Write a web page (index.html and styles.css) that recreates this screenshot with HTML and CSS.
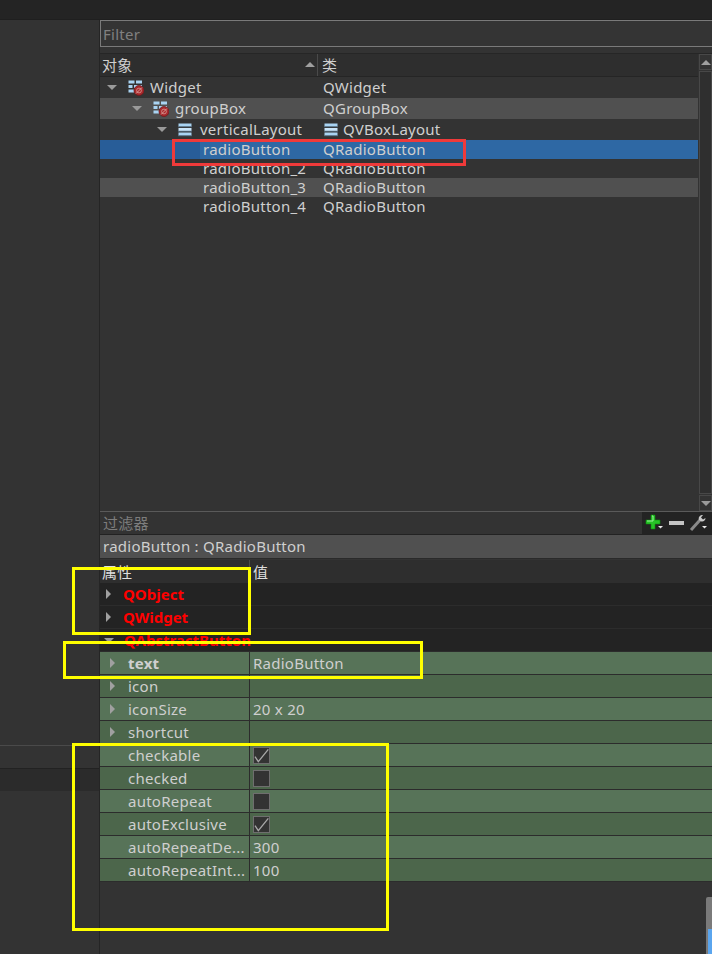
FILE: index.html
```html
<!DOCTYPE html>
<html lang="en">
<head>
    <meta charset="UTF-8">
    <meta name="viewport" content="width=device-width, initial-scale=1.0">
    <title>Qt Designer panels</title>
    <link rel="stylesheet" href="styles.css">
</head>
<body>
    <svg class="defs" width="0" height="0">
        <defs>
            <symbol id="bars" viewBox="0 0 14 14">
                <rect x="0.5" y="0.5" width="13" height="3" fill="#a9d3f2"/>
                <rect x="0.5" y="5" width="13" height="3" fill="#c9e4f8"/>
                <rect x="0.5" y="9.5" width="13" height="3" fill="#a9d3f2"/>
                <path d="M0 3.7h14M0 8.2h14M0 12.7h14" stroke="#5d7c94" stroke-width="0.8"/>
            </symbol>
            <symbol id="form" viewBox="0 0 16 16">
                <path d="M0.5 0.5h6v3h-6zM8 0.5h6v3h-6zM0.5 5h4v3h-4zM6 5h8v3h-8zM0.5 9.5h6v3h-6z" fill="#a9d3f2"/>
                <circle cx="11" cy="10.5" r="5" fill="#a8282c" stroke="#6e1a1c" stroke-width="0.8"/>
                <path d="M8 13.5l6-6" stroke="#d89a94" stroke-width="1"/>
                <circle cx="11" cy="10.5" r="2.4" fill="none" stroke="#d89a94" stroke-width="0.8"/>
            </symbol>
            <symbol id="tick" viewBox="0 0 15 15">
                <path d="M1 8.7l3.3 5L14.3 1.3" fill="none" stroke="#a8a8a8" stroke-width="1.3"/>
            </symbol>
        </defs>
    </svg>

    <div class="window">
        <div class="topbar"></div>
        <div class="workspace">
            <div class="sidebar">
                <div class="side-tab"></div>
                <div class="side-strip"></div>
            </div>

            <div class="panels">
                <div class="filter-input">Filter</div>

                <div class="object-area">
                    <div class="object-tree">
                        <div class="tree-header">
                            <div class="tree-head-name">对象<span class="sort-up"></span></div>
                            <div class="tree-head-type">类</div>
                        </div>
                        <div class="tree-row">
                            <div class="tree-name depth-0"><span class="arrow-down"></span><svg class="form-icon"><use href="#form"/></svg>Widget</div>
                            <div class="tree-type">QWidget</div>
                        </div>
                        <div class="tree-row alt">
                            <div class="tree-name depth-1"><span class="arrow-down"></span><svg class="form-icon"><use href="#form"/></svg>groupBox</div>
                            <div class="tree-type">QGroupBox</div>
                        </div>
                        <div class="tree-row">
                            <div class="tree-name depth-2"><span class="arrow-down"></span><svg class="bars-icon"><use href="#bars"/></svg>verticalLayout</div>
                            <div class="tree-type"><svg class="bars-icon type-icon"><use href="#bars"/></svg>QVBoxLayout</div>
                        </div>
                        <div class="tree-row leaf selected">
                            <div class="tree-name depth-3"><span class="sel-branch"></span><span class="sel-text">radioButton</span></div>
                            <div class="tree-type">QRadioButton</div>
                        </div>
                        <div class="tree-row leaf">
                            <div class="tree-name depth-3">radioButton_2</div>
                            <div class="tree-type">QRadioButton</div>
                        </div>
                        <div class="tree-row leaf alt">
                            <div class="tree-name depth-3">radioButton_3</div>
                            <div class="tree-type">QRadioButton</div>
                        </div>
                        <div class="tree-row leaf">
                            <div class="tree-name depth-3">radioButton_4</div>
                            <div class="tree-type">QRadioButton</div>
                        </div>
                    </div>
                    <div class="scrollbar">
                        <div class="scroll-btn"><span class="sort-up"></span></div>
                        <div class="scroll-groove"></div>
                        <div class="scroll-btn"><span class="arrow-down"></span></div>
                    </div>
                </div>

                <div class="filter-bar">
                    <div class="filter-label">过滤器</div>
                    <div class="tools">
                        <svg class="tool" width="20" height="20" viewBox="0 0 20 20">
                            <path d="M6 2h4v5h5v4h-5v5H6v-5H1V7h5z" fill="#27c427" stroke="#0f8f0f" stroke-width="0.6"/>
                            <path d="M7 3h1v5H2" fill="none" stroke="#9cf09c"/>
                            <path d="M13 13h5l-2.5 2.5z" fill="#e8e8e8"/>
                        </svg>
                        <svg class="tool" width="18" height="20" viewBox="0 0 18 20">
                            <rect x="1" y="8" width="15" height="4" fill="#c4c4c4"/>
                        </svg>
                        <svg class="tool" width="20" height="20" viewBox="0 0 20 20">
                            <path d="M2 17l9-10" stroke="#8a8a8a" stroke-width="3"/>
                            <path d="M10 7c-1-3 1-5 4-5l-2 2.5 2 2 2.5-1.500c0 3-3 4.500-5 3z" fill="#c8c8c8"/>
                            <path d="M13 13h5l-2.5 2.5z" fill="#e8e8e8"/>
                        </svg>
                    </div>
                </div>

                <div class="object-label">radioButton : QRadioButton</div>

                <div class="prop-header">
                    <div class="prop-head-name">属性</div>
                    <div class="prop-head-value">值</div>
                </div>

                <div class="category"><span class="arrow-right"></span><span class="cat-name">QObject</span></div>
                <div class="category"><span class="arrow-right"></span><span class="cat-name">QWidget</span></div>
                <div class="category"><span class="arrow-down"></span><span class="cat-name">QAbstractButton</span></div>

                <div class="prop light">
                    <div class="prop-name strong"><span class="arrow-right"></span>text</div>
                    <div class="prop-value">RadioButton</div>
                </div>
                <div class="prop">
                    <div class="prop-name"><span class="arrow-right"></span>icon</div>
                    <div class="prop-value"></div>
                </div>
                <div class="prop light">
                    <div class="prop-name"><span class="arrow-right"></span>iconSize</div>
                    <div class="prop-value">20 x 20</div>
                </div>
                <div class="prop">
                    <div class="prop-name"><span class="arrow-right"></span>shortcut</div>
                    <div class="prop-value"></div>
                </div>
                <div class="prop light">
                    <div class="prop-name">checkable</div>
                    <div class="prop-value"><span class="check"><svg><use href="#tick"/></svg></span></div>
                </div>
                <div class="prop">
                    <div class="prop-name">checked</div>
                    <div class="prop-value"><span class="check"></span></div>
                </div>
                <div class="prop light">
                    <div class="prop-name">autoRepeat</div>
                    <div class="prop-value"><span class="check"></span></div>
                </div>
                <div class="prop">
                    <div class="prop-name">autoExclusive</div>
                    <div class="prop-value"><span class="check"><svg><use href="#tick"/></svg></span></div>
                </div>
                <div class="prop light">
                    <div class="prop-name">autoRepeatDe...</div>
                    <div class="prop-value">300</div>
                </div>
                <div class="prop">
                    <div class="prop-name">autoRepeatInt...</div>
                    <div class="prop-value">100</div>
                </div>
            </div>
        </div>

        <!-- annotations drawn on top of the screenshot -->
        <div class="mark mark-red"></div>
        <div class="mark mark-yellow mark-a"></div>
        <div class="mark mark-yellow mark-b"></div>
        <div class="mark mark-yellow mark-c"></div>
        <div class="corner-scroll"><div class="corner-thumb"></div></div>
    </div>
</body>
</html>
```

FILE: styles.css
```css
body, html {
    margin: 0;
    padding: 0;
    background-color: #333333;
}
.defs {
    position: absolute;
}
.window {
    position: relative;
    width: 712px;
    height: 954px;
    overflow: hidden;
    display: flex;
    flex-direction: column;
    font-family: "Noto Sans", "Noto Sans CJK SC", sans-serif;
    font-size: 15px;
    letter-spacing: 0.25px;
    color: #cfcfcf;
    background-color: #333333;
}
.topbar {
    height: 19px;
    background-color: #242424;
    border-bottom: 1px solid #1f1f1f;
}
.workspace {
    flex: 1;
    display: flex;
    min-height: 0;
}

/* left dock */
.sidebar {
    width: 100px;
    flex-shrink: 0;
    box-sizing: border-box;
    padding-top: 725px;
    border-right: 1px solid #252525;
}
.side-tab {
    height: 22px;
    border-top: 1px solid #4a4a4a;
    border-bottom: 1px solid #222222;
}
.side-strip {
    height: 22px;
    background-color: #2b2b2b;
}

.panels {
    flex: 1;
    min-width: 0;
    display: flex;
    flex-direction: column;
}
.filter-input {
    height: 25px;
    line-height: 27px;
    padding-left: 2px;
    border: 1px solid #7a7a7a;
    border-right: none;
    color: #808080;
    background-color: #343434;
}

/* object tree */
.object-area {
    display: flex;
    height: 457px;
    margin-top: 6px;
    border-top: 1px solid #262626;
}
.object-tree {
    width: 598px;
    flex-shrink: 0;
}
.tree-header {
    display: grid;
    grid-template-columns: 218px 1fr;
    height: 22px;
    line-height: 22px;
    background-color: #2e2e2e;
    border-bottom: 1px solid #252525;
}
.tree-head-name {
    position: relative;
    padding-left: 2px;
    border-right: 1px solid #4a4a4a;
}
.tree-head-name .sort-up {
    position: absolute;
    right: 2px;
    top: 8px;
}
.tree-head-type {
    padding-left: 4px;
}
.tree-row {
    display: grid;
    grid-template-columns: 218px 1fr;
    height: 21px;
    line-height: 21px;
    white-space: nowrap;
}
.tree-row.leaf {
    height: 19px;
    line-height: 19px;
}
.tree-row.alt {
    background-color: #505050;
}
.tree-row.selected {
    background-color: #2e68a4;
}
.tree-name {
    display: flex;
    align-items: center;
    position: relative;
}
.depth-0 { padding-left: 7px; }
.depth-1 { padding-left: 32px; }
.depth-2 { padding-left: 57px; }
.depth-3 { padding-left: 103px; }
.sel-branch {
    position: absolute;
    left: 0;
    top: 0;
    width: 100px;
    height: 100%;
    background-color: #285d98;
}
.sel-text {
    position: relative;
}
.tree-type {
    display: flex;
    align-items: center;
    padding-left: 5px;
}
.form-icon {
    width: 16px;
    height: 16px;
    margin: 0 6px 0 11px;
}
.bars-icon {
    width: 14px;
    height: 14px;
    margin: 0 8px 0 11px;
}
.type-icon {
    margin: 0 5px 0 1px;
}
.arrow-down {
    display: inline-block;
    width: 0;
    height: 0;
    border-left: 5px solid transparent;
    border-right: 5px solid transparent;
    border-top: 5px solid #9a9a9a;
}
.sort-up {
    display: inline-block;
    width: 0;
    height: 0;
    border-left: 5px solid transparent;
    border-right: 5px solid transparent;
    border-bottom: 5px solid #a0a0a0;
}
.arrow-right {
    display: inline-block;
    width: 0;
    height: 0;
    border-top: 5px solid transparent;
    border-bottom: 5px solid transparent;
    border-left: 5px solid #a0a0a0;
}

/* tree scrollbar */
.scrollbar {
    flex: 1;
    display: flex;
    flex-direction: column;
    gap: 1px;
    margin-left: 1px;
}
.scroll-btn {
    height: 14px;
    border: 1px solid #484848;
    display: flex;
    align-items: center;
    justify-content: center;
}
.scroll-groove {
    flex: 1;
    border: 1px solid #484848;
    background-color: #2f2f2f;
}

/* property editor */
.filter-bar {
    display: flex;
    height: 22px;
    border-top: 1px solid #5a5a5a;
    border-bottom: 1px solid #222222;
    justify-content: space-between;
}
.filter-label {
    line-height: 22px;
    padding-left: 3px;
    color: #7d7d7d;
}
.tools {
    width: 70px;
    display: flex;
    align-items: center;
    gap: 3px;
    padding-left: 3px;
    box-sizing: border-box;
    background-color: #232323;
}
.tool {
    flex-shrink: 0;
}
.object-label {
    height: 23px;
    line-height: 23px;
    padding-left: 3px;
    background-color: #505050;
    border-bottom: 1px solid #2a2a2a;
}
.prop-header {
    display: grid;
    grid-template-columns: 150px 1fr;
    height: 23px;
    line-height: 25px;
    margin-top: 1px;
    background-color: #2e2e2e;
    color: #dedede;
}
.prop-head-name {
    padding-left: 2px;
    border-right: 1px solid #4a4a4a;
}
.prop-head-value {
    padding-left: 3px;
}
.category {
    display: flex;
    align-items: center;
    box-sizing: border-box;
    height: 23px;
    padding-left: 6px;
    background-color: #232323;
    border-bottom: 1px solid #2c2c2c;
}
.cat-name {
    margin-left: 12px;
    font-weight: 700;
    letter-spacing: 0;
    color: #ff0000;
}
.category .arrow-down {
    margin-left: -2px;
}
.category .arrow-down + .cat-name {
    margin-left: 10px;
}
.prop {
    display: grid;
    grid-template-columns: 150px 1fr;
    box-sizing: border-box;
    height: 23px;
    background-color: #4c664b;
    border-bottom: 1px solid #2c2c2c;
    white-space: nowrap;
}
.prop.light {
    background-color: #577358;
}
.prop-name {
    position: relative;
    display: flex;
    align-items: center;
    padding-left: 28px;
    border-right: 1px solid #2c2c2c;
}
.prop-name .arrow-right {
    position: absolute;
    left: 10px;
    top: 6px;
}
.prop-name.strong {
    font-weight: 700;
}
.prop-value {
    display: flex;
    align-items: center;
    padding-left: 3px;
}
.check {
    width: 15px;
    height: 15px;
    border: 1px solid #6e6e6e;
    background-color: #333333;
}
.check svg {
    display: block;
    width: 15px;
    height: 15px;
    overflow: visible;
}

/* overlays */
.mark {
    position: absolute;
    box-sizing: border-box;
}
.mark-red {
    left: 172px;
    top: 139px;
    width: 294px;
    height: 27px;
    border: 3px solid #ef3a3a;
}
.mark-yellow {
    border: 3px solid #ffff00;
}
.mark-a {
    left: 72px;
    top: 567px;
    width: 179px;
    height: 68px;
}
.mark-b {
    left: 63px;
    top: 641px;
    width: 360px;
    height: 38px;
}
.mark-c {
    left: 72px;
    top: 743px;
    width: 317px;
    height: 188px;
}
.corner-scroll {
    position: absolute;
    left: 706px;
    top: 897px;
    width: 6px;
    height: 57px;
    background-color: #7a7a7a;
    border-radius: 2px 0 0 0;
}
.corner-thumb {
    margin-top: 32px;
    margin-left: 2px;
    height: 25px;
    background-color: #5aa5ee;
}
```
